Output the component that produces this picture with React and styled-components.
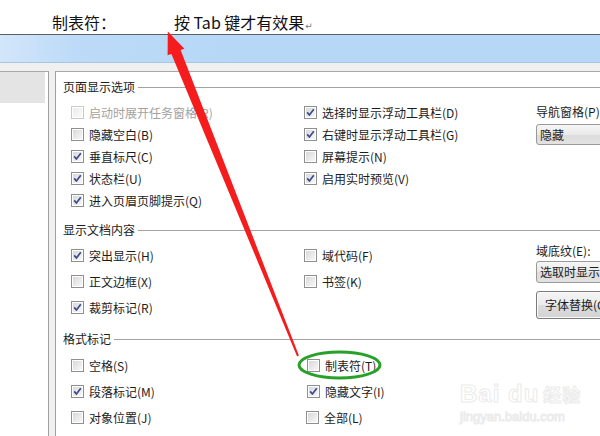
import React, { useId } from "react";
import styled, { createGlobalStyle } from "styled-components";

const Global = createGlobalStyle`
  html, body { margin: 0; padding: 0; background: #fff; }
  body { width: 600px; height: 436px; overflow: hidden; }
  #root { width: 600px; height: 436px; }
`;

const CJK = `"Noto Sans CJK SC", "Noto Sans", sans-serif`;

const Page = styled.div`
  position: relative;
  width: 600px;
  height: 436px;
  overflow: hidden;
  font-family: ${CJK};
  color: #1c1c1c;
  display: flex;
  flex-direction: column;
`;

const Caption = styled.div`
  height: 35px;
  box-sizing: border-box;
  padding: 13px 0 0 52px;
  font-size: 16px;
  line-height: 18px;
  color: #111;
  border-bottom: 1px solid #5e5e5e;
  display: flex;
  flex: none;
  white-space: nowrap;
`;

const CaptionLabel = styled.span`
  width: 122px;
  flex: none;
`;

const ReturnMark = styled.span`
  font-family: "DejaVu Sans", sans-serif;
  font-size: 9px;
  color: #777;
  margin-left: 1px;
  padding-top: 4px;
`;

const TitleBar = styled.div`
  height: 27px;
  flex: none;
  background: linear-gradient(to right, #d3e6fa 0%, #bddbf8 12%, #b6d7f6 40%, #b6d7f6 100%);
  border-bottom: 1px solid #a8c6e2;
`;

const Body = styled.div`
  flex: 1;
  display: flex;
  background: #f0f0f0;
  padding-top: 8px;
  min-height: 0;
`;

const NavPane = styled.div`
  width: 49px;
  flex: none;
  background: #fff;
  border-top: 1px solid #a7a7a7;
  border-right: 1px solid #a0a0a0;
  padding-right: 3px;
  box-sizing: border-box;
`;

const NavItem = styled.div`
  height: 31px;
  background: #e4e4e4;
`;

const MainPanel = styled.div`
  flex: 0 0 640px;
  margin-left: 6px;
  background: #fff;
  border-top: 1px solid #a7a7a7;
  border-left: 1px solid #a0a0a0;
  padding: 7px 0 0 7px;
  box-sizing: border-box;
`;

const Section = styled.section`
  margin-top: ${(p) => p.$top}px;
`;

const SectionHeader = styled.div`
  display: flex;
  align-items: center;
  height: 16px;
  font-size: 12px;
  line-height: 16px;
  color: #1c1c1c;
`;

const HeaderRule = styled.div`
  flex: 1;
  height: 1px;
  background: #a3a3a3;
  margin-left: 3px;
`;

const Grid = styled.div`
  display: grid;
  grid-template-columns: 233px 232px 140px;
  grid-auto-rows: ${(p) => p.$row}px;
  margin: ${(p) => p.$gap}px 0 0 8px;
`;

const Cell = styled.label`
  display: flex;
  align-items: center;
  gap: 5px;
  font-size: 12px;
  white-space: nowrap;
  grid-column: ${(p) => p.$col};
  padding-left: ${(p) => p.$shift || 0}px;
  color: ${(p) => (p.$disabled ? "#a2a2a2" : "#1c1c1c")};
`;

const SideColumn = styled.div`
  grid-column: 3;
  grid-row: 1 / span ${(p) => p.$span};
  display: flex;
  flex-direction: column;
  align-items: flex-start;
  padding-top: ${(p) => p.$top}px;
`;

const SideLabel = styled.div`
  font-size: 12px;
  line-height: 16px;
  white-space: nowrap;
  color: #1c1c1c;
`;

const SelectBox = styled.div`
  margin-top: ${(p) => p.$top}px;
  width: 110px;
  height: 22px;
  box-sizing: border-box;
  border: 1px solid #9a9a9a;
  border-radius: 3px;
  background: linear-gradient(#f6f6f6, #e9e9e9 50%, #dcdcdc 51%, #e2e2e2);
  font-size: 12px;
  line-height: 20px;
  padding-left: 3px;
  white-space: nowrap;
  overflow: hidden;
  color: #1c1c1c;
`;

const PushButton = styled.div`
  margin-top: 8px;
  width: 110px;
  height: 28px;
  box-sizing: border-box;
  border: 1px solid #7a7a7a;
  border-radius: 3px;
  background: linear-gradient(#f4f4f4, #ebebeb 50%, #dddddd 51%, #d2d2d2);
  box-shadow: inset 0 0 0 1px #fbfbfb;
  font-size: 12px;
  line-height: 26px;
  padding-left: 8px;
  white-space: nowrap;
  overflow: hidden;
  color: #1c1c1c;
`;

const Overlay = styled.svg`
  position: absolute;
  left: 0;
  top: 0;
  pointer-events: none;
`;

const Watermark = styled.div`
  position: absolute;
  left: 460px;
  top: 382px;
  pointer-events: none;
  color: #fff;
  -webkit-text-stroke: 1px #ebebeb;
  font-family: "Liberation Sans", Arial, sans-serif;
  line-height: 1;
`;

const WmBig = styled.div`
  font-size: 24px;
  font-weight: bold;
  letter-spacing: 1px;
  white-space: nowrap;
  span { font-family: ${CJK}; font-size: 18px; margin-left: 4px; }
`;

const WmSmall = styled.div`
  font-size: 13px;
  margin-top: 4px;
  white-space: nowrap;
`;

function CheckIcon({ checked, disabled }) {
  const id = useId().replace(/:/g, "");
  return (
    <svg width="13" height="13" viewBox="0 0 13 13" style={{ flex: "none" }}>
      <defs>
        <linearGradient id={id} x1="0" y1="0" x2="1" y2="1">
          <stop offset="0" stopColor={disabled ? "#ececec" : "#d9d9d9"} />
          <stop offset="1" stopColor={disabled ? "#fafafa" : "#f7f7f7"} />
        </linearGradient>
      </defs>
      <rect x="0.5" y="0.5" width="12" height="12" fill="#fff" stroke={disabled ? "#cacaca" : "#8e8f8f"} />
      <rect x="2" y="2" width="9" height="9" fill={`url(#${id})`} />
      {checked && (
        <path d="M3.2 6.4 L5.4 9 L9.8 3.3" fill="none" stroke="#3a4b8e" strokeWidth="1.7" strokeLinejoin="round" />
      )}
    </svg>
  );
}

function Option({ col, label, checked, disabled, shift, row }) {
  return (
    <Cell $col={col} $disabled={disabled} $shift={shift} style={row ? { gridRow: row } : undefined}>
      <CheckIcon checked={checked} disabled={disabled} />
      <span>{label}</span>
    </Cell>
  );
}

export default function App() {
  return (
    <>
      <Global />
      <Page>
        <Caption>
          <CaptionLabel>制表符：</CaptionLabel>
          <span>按 Tab 键才有效果</span>
          <ReturnMark>↵</ReturnMark>
        </Caption>
        <TitleBar />
        <Body>
          <NavPane>
            <NavItem />
          </NavPane>
          <MainPanel>
            <Section $top={0}>
              <SectionHeader>
                页面显示选项
                <HeaderRule />
              </SectionHeader>
              <Grid $row={22} $gap={6}>
                <Option col={1} row={1} label="启动时展开任务窗格(R)" disabled />
                <Option col={2} row={1} label="选择时显示浮动工具栏(D)" checked />
                <SideColumn $span={2} $top={3}>
                  <SideLabel>导航窗格(P):</SideLabel>
                  <SelectBox $top={4}>隐藏</SelectBox>
                </SideColumn>
                <Option col={1} row={2} label="隐藏空白(B)" />
                <Option col={2} row={2} label="右键时显示浮动工具栏(G)" checked />
                <Option col={1} row={3} label="垂直标尺(C)" checked />
                <Option col={2} row={3} label="屏幕提示(N)" />
                <Option col={1} row={4} label="状态栏(U)" checked />
                <Option col={2} row={4} label="启用实时预览(V)" checked />
                <Option col={1} row={5} label="进入页眉页脚提示(Q)" checked />
              </Grid>
            </Section>

            <Section $top={11}>
              <SectionHeader>
                显示文档内容
                <HeaderRule />
              </SectionHeader>
              <Grid $row={26} $gap={4}>
                <Option col={1} row={1} label="突出显示(H)" checked />
                <Option col={2} row={1} label="域代码(F)" />
                <SideColumn $span={3} $top={1}>
                  <SideLabel>域底纹(E):</SideLabel>
                  <SelectBox $top={2}>选取时显示</SelectBox>
                  <PushButton>字体替换(O)...</PushButton>
                </SideColumn>
                <Option col={1} row={2} label="正文边框(X)" />
                <Option col={2} row={2} label="书签(K)" />
                <Option col={1} row={3} label="裁剪标记(R)" checked />
              </Grid>
            </Section>

            <Section $top={11}>
              <SectionHeader>
                格式标记
                <HeaderRule />
              </SectionHeader>
              <Grid $row={26} $gap={5}>
                <Option col={1} row={1} label="空格(S)" />
                <Option col={2} row={1} label="制表符(T)" shift={3} />
                <Option col={1} row={2} label="段落标记(M)" checked />
                <Option col={2} row={2} label="隐藏文字(I)" checked shift={3} />
                <Option col={1} row={3} label="对象位置(J)" />
                <Option col={2} row={3} label="全部(L)" shift={2} />
              </Grid>
            </Section>
          </MainPanel>
        </Body>

        <Watermark>
          <WmBig>
            Bai du<span>经验</span>
          </WmBig>
          <WmSmall>jingyan.baidu.com</WmSmall>
        </Watermark>

        <Overlay width="600" height="436" viewBox="0 0 600 436">
          <ellipse cx="339.5" cy="365" rx="40.5" ry="13" fill="none" stroke="#27a127" strokeWidth="3" />
          <polygon
            fill="#f41c1c"
            points="167.8,31.6 184.4,48.7 180.6,50.1 298.9,355.6 297.1,356.4 171.4,53.9 167.6,55.3"
          />
        </Overlay>
      </Page>
    </>
  );
}
